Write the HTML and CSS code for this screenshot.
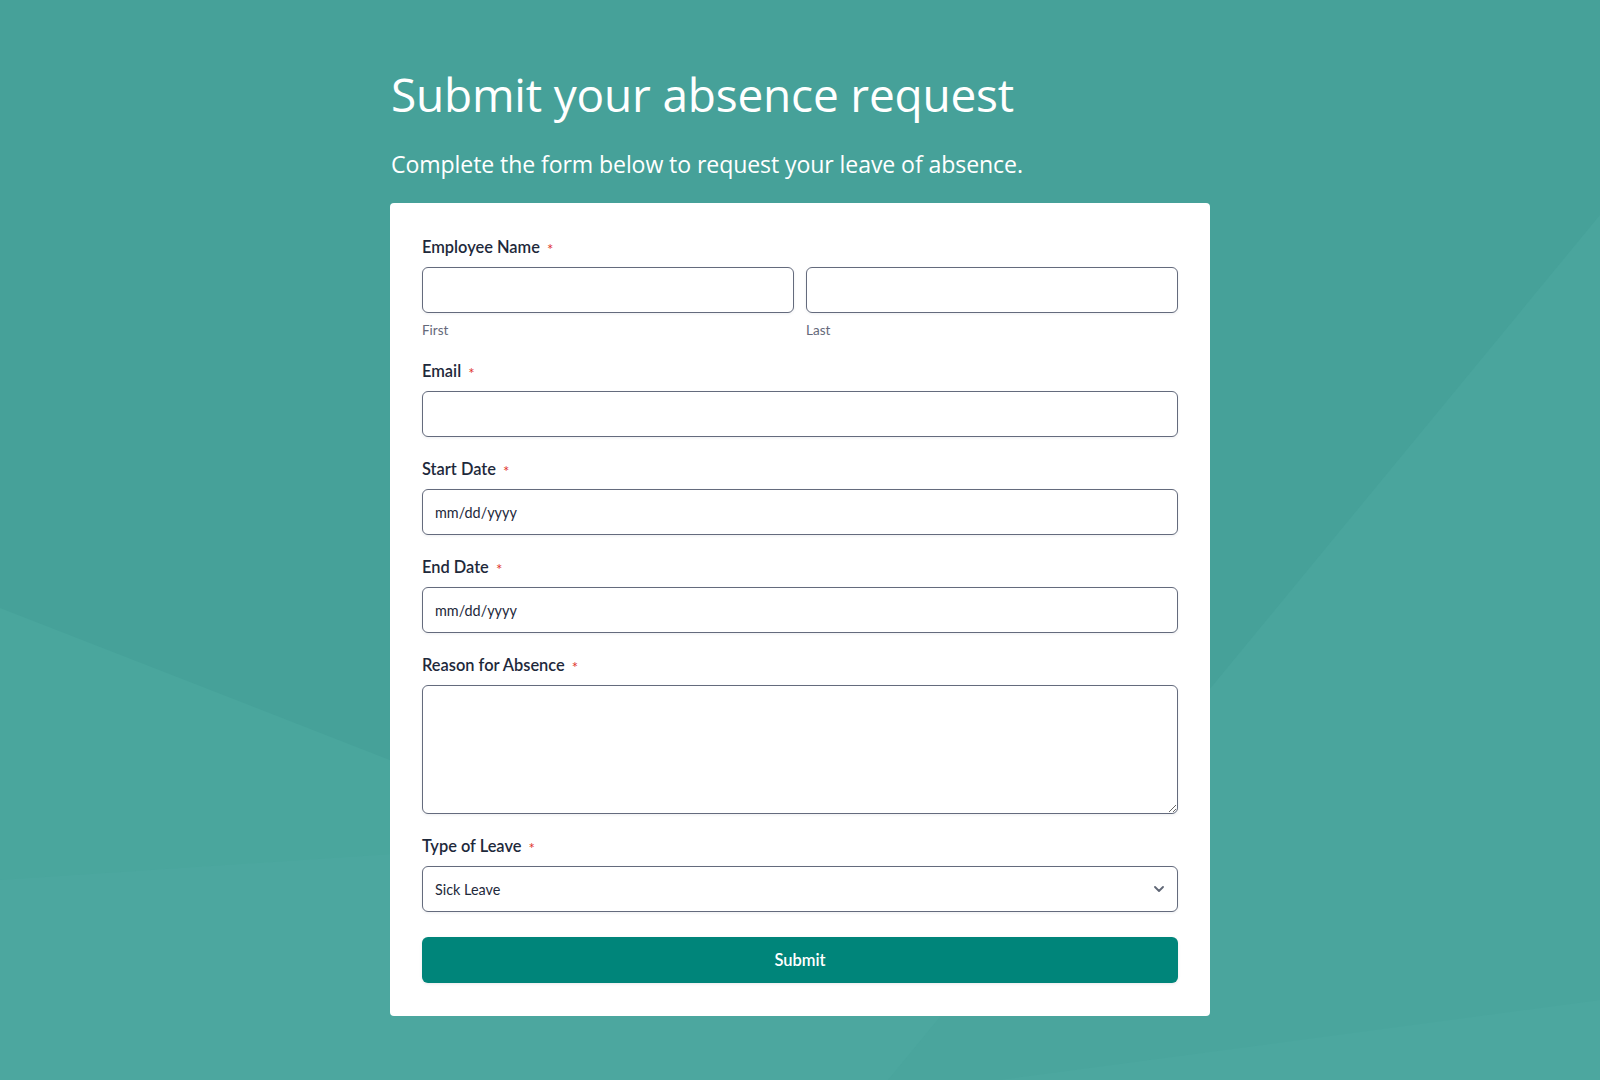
FILE: index.html
```html
<!DOCTYPE html>
<html lang="en">
<head>
<meta charset="utf-8">
<title>Submit your absence request</title>
<link rel="stylesheet" href="styles.css">
</head>
<body>
<svg class="bg" viewBox="0 0 1600 1080" preserveAspectRatio="none" aria-hidden="true">
  <rect width="1600" height="1080" fill="#46a199"/>
  <polygon points="0,608 1210,1080 0,1080" fill="#4aa69d"/>
  <polygon points="0,880 1210,800 1210,1080 0,1080" fill="#4ca79f"/>
  <polygon points="888,1080 1600,215 1600,1080" fill="#4aa59d"/>
  <polygon points="1000,1080 1600,1000 1600,1080" fill="#4ca79f"/>
</svg>
<main class="page">
  <header class="intro">
    <h1 class="title">Submit your absence request</h1>
    <p class="subtitle">Complete the form below to request your leave of absence.</p>
  </header>
  <form class="card">
    <div class="field field-name">
      <label class="label">Employee Name <span class="req">*</span></label>
      <div class="name-row">
        <div class="name-col">
          <input class="input" type="text">
          <span class="sublabel">First</span>
        </div>
        <div class="name-col">
          <input class="input" type="text">
          <span class="sublabel">Last</span>
        </div>
      </div>
    </div>
    <div class="field">
      <label class="label">Email <span class="req">*</span></label>
      <input class="input" type="email">
    </div>
    <div class="field">
      <label class="label">Start Date <span class="req">*</span></label>
      <input class="input date" type="text" placeholder="mm/dd/yyyy">
    </div>
    <div class="field">
      <label class="label">End Date <span class="req">*</span></label>
      <input class="input date" type="text" placeholder="mm/dd/yyyy">
    </div>
    <div class="field">
      <label class="label">Reason for Absence <span class="req">*</span></label>
      <textarea class="input textarea"></textarea>
    </div>
    <div class="field">
      <label class="label">Type of Leave <span class="req">*</span></label>
      <div class="select-wrap">
        <select class="input select">
          <option>Sick Leave</option>
          <option>Vacation</option>
          <option>Personal Leave</option>
        </select>
        <svg class="chevron" viewBox="0 0 10 6" aria-hidden="true"><path d="M1 1l4 4 4-4" fill="none" stroke="#5f6675" stroke-width="1.8" stroke-linecap="round" stroke-linejoin="round"/></svg>
      </div>
    </div>
    <button class="submit" type="button">Submit</button>
  </form>
</main>
</body>
</html>
```

FILE: styles.css
```css
* { box-sizing: border-box; }

html, body {
  margin: 0;
  height: 100%;
}

body {
  background: #46a199;
  font-family: "Lato", "Noto Sans", sans-serif;
  color: #1e293b;
  position: relative;
  overflow: hidden;
}

.bg {
  position: absolute;
  inset: 0;
  width: 100%;
  height: 100%;
  z-index: 0;
}

.page {
  position: relative;
  z-index: 1;
  width: 820px;
  margin: 0 auto;
  padding-top: 64px;
}

.intro {
  padding-left: 1px;
}

.title {
  margin: 0;
  font-family: "Open Sans", "Noto Sans", sans-serif;
  font-weight: 400;
  font-size: 46px;
  line-height: 60px;
  letter-spacing: -0.2px;
  color: #ffffff;
}

.subtitle {
  margin: 25px 0 0;
  font-family: "Open Sans", "Noto Sans", sans-serif;
  font-weight: 400;
  font-size: 23.1px;
  line-height: 30px;
  letter-spacing: -0.1px;
  color: #ffffff;
}

.card {
  margin-top: 24px;
  background: #ffffff;
  border-radius: 4px;
  padding: 32px 32px 33px;
  display: flex;
  flex-direction: column;
}

.field {
  display: flex;
  flex-direction: column;
  margin-bottom: 20px;
}

.field-name {
  margin-bottom: 20px;
}

.label {
  display: block;
  height: 24px;
  font-size: 16.4px;
  line-height: 24px;
  font-weight: 600;
  color: #1e293b;
  margin-bottom: 8px;
}

.req {
  color: #e0332b;
  font-size: 15px;
  line-height: 0;
  font-weight: 400;
  margin-left: 3px;
  vertical-align: -2px;
}

.name-row {
  display: flex;
  gap: 12px;
}

.name-col {
  flex: 1;
  display: flex;
  flex-direction: column;
}

.sublabel {
  margin-top: 8px;
  font-size: 13.5px;
  line-height: 18px;
  color: #64697a;
}

.input {
  display: block;
  width: 100%;
  height: 46px;
  margin: 0;
  padding: 0 12px;
  border: 1px solid #646b7d;
  border-radius: 6px;
  background: #ffffff;
  box-shadow: 0 1px 3px rgba(30, 41, 59, 0.08);
  font-family: "Lato", "Noto Sans", sans-serif;
  font-size: 14.4px;
  color: #1e293b;
  outline: none;
}

.date::placeholder {
  color: #1e293b;
  opacity: 1;
}

.textarea {
  height: 129px;
  padding: 10px 12px;
  resize: vertical;
}

.select-wrap {
  position: relative;
}

.select {
  appearance: none;
  -webkit-appearance: none;
  padding-right: 36px;
}

.chevron {
  position: absolute;
  right: 14px;
  top: 20px;
  width: 10px;
  height: 6px;
  pointer-events: none;
}

.submit {
  margin-top: 5px;
  height: 46px;
  width: 100%;
  border: none;
  border-radius: 6px;
  background: #00857a;
  color: #ffffff;
  font-family: "Lato", "Noto Sans", sans-serif;
  font-size: 16.5px;
  font-weight: 600;
  box-shadow: 0 1px 3px rgba(30, 41, 59, 0.1);
}
```
